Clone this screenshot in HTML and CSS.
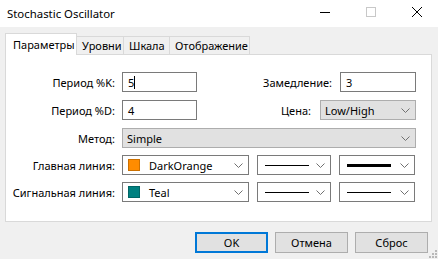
FILE: index.html
```html
<!DOCTYPE html>
<html>
<head>
<meta charset="utf-8">
<link rel="stylesheet" href="styles.css">
</head>
<body>
<div class="window">
  <div class="titlebar">
    <span class="title">Stochastic Oscillator</span>
    <div class="caption-btns">
      <svg class="cap" width="46" height="27" viewBox="0 0 46 27"><path d="M18 12.5h10" stroke="#000" stroke-width="1"/></svg>
      <svg class="cap" width="46" height="27" viewBox="0 0 46 27"><rect x="18.5" y="7.5" width="9" height="9" fill="none" stroke="#c8c8c8"/></svg>
      <svg class="cap" width="46" height="27" viewBox="0 0 46 27"><path d="M18 7l10 10M28 7l-10 10" stroke="#000" stroke-width="1"/></svg>
    </div>
  </div>

  <div class="tabs">
    <div class="tab active">Параметры</div>
    <div class="tab">Уровни</div>
    <div class="tab">Шкала</div>
    <div class="tab">Отображение</div>
  </div>

  <div class="panel">
    <div class="row r1">
      <span class="lbl">Период %K:</span>
      <div class="edit w75"><span>5</span><span class="caret"></span></div>
      <span class="lbl2">Замедление:</span>
      <div class="edit w76"><span>3</span></div>
    </div>
    <div class="row r2">
      <span class="lbl">Период %D:</span>
      <div class="edit w75"><span>4</span></div>
      <span class="lbl2">Цена:</span>
      <div class="combo grey w96"><span>Low/High</span><svg class="chev" width="9" height="5" viewBox="0 0 9 5"><path d="M0.5 0.5l4 4 4-4" fill="none" stroke="#707070"/></svg></div>
    </div>
    <div class="row r3">
      <span class="lbl">Метод:</span>
      <div class="combo grey wfull"><span>Simple</span><svg class="chev" width="9" height="5" viewBox="0 0 9 5"><path d="M0.5 0.5l4 4 4-4" fill="none" stroke="#707070"/></svg></div>
    </div>
    <div class="row r4">
      <span class="lbl">Главная линия:</span>
      <div class="combo white wcolor"><span class="swatch orange"></span><span>DarkOrange</span><svg class="chev" width="9" height="5" viewBox="0 0 9 5"><path d="M0.5 0.5l4 4 4-4" fill="none" stroke="#707070"/></svg></div>
      <div class="combo white w74"><span class="line thin"></span><svg class="chev" width="9" height="5" viewBox="0 0 9 5"><path d="M0.5 0.5l4 4 4-4" fill="none" stroke="#707070"/></svg></div>
      <div class="combo white w76"><span class="line thick"></span><svg class="chev" width="9" height="5" viewBox="0 0 9 5"><path d="M0.5 0.5l4 4 4-4" fill="none" stroke="#707070"/></svg></div>
    </div>
    <div class="row r5">
      <span class="lbl">Сигнальная линия:</span>
      <div class="combo white wcolor"><span class="swatch teal"></span><span>Teal</span><svg class="chev" width="9" height="5" viewBox="0 0 9 5"><path d="M0.5 0.5l4 4 4-4" fill="none" stroke="#707070"/></svg></div>
      <div class="combo white w74"><span class="line thin"></span><svg class="chev" width="9" height="5" viewBox="0 0 9 5"><path d="M0.5 0.5l4 4 4-4" fill="none" stroke="#707070"/></svg></div>
      <div class="combo white w76"><span class="line thin"></span><svg class="chev" width="9" height="5" viewBox="0 0 9 5"><path d="M0.5 0.5l4 4 4-4" fill="none" stroke="#707070"/></svg></div>
    </div>
  </div>

  <div class="buttons">
    <div class="btn default">OK</div>
    <div class="btn">Отмена</div>
    <div class="btn">Сброс</div>
  </div>
  <svg class="grip" width="8" height="8" viewBox="0 0 8 8">
    <rect x="6" y="0" width="2" height="2" fill="#b8b8b8"/>
    <rect x="3" y="3" width="2" height="2" fill="#b8b8b8"/>
    <rect x="6" y="3" width="2" height="2" fill="#b8b8b8"/>
    <rect x="0" y="6" width="2" height="2" fill="#b8b8b8"/>
    <rect x="3" y="6" width="2" height="2" fill="#b8b8b8"/>
    <rect x="6" y="6" width="2" height="2" fill="#b8b8b8"/>
  </svg>
</div>
</body>
</html>
```

FILE: styles.css
```css
* { box-sizing: border-box; }
html, body { margin: 0; padding: 0; }
body {
  width: 438px;
  height: 259px;
  overflow: hidden;
  background: #f0f0f0;
  font-family: "Noto Sans", "Open Sans", sans-serif;
  font-size: 11px;
  color: #000;
}
.window {
  position: relative;
  width: 438px;
  height: 259px;
  background: #f0f0f0;
}
.titlebar {
  height: 27px;
  background: #fff;
  display: flex;
  align-items: center;
  justify-content: space-between;
}
.title {
  padding-left: 7px;
  font-size: 11.4px;
  line-height: 27px;
}
.caption-btns {
  display: flex;
  margin-right: -2px;
}
.cap { display: block; }

.tabs {
  display: flex;
  align-items: flex-end;
  padding-left: 5px;
  margin-top: 6px;
  height: 21px;
  position: relative;
  z-index: 1;
}
.tab {
  height: 18px;
  line-height: 17px;
  padding: 0 0 0 5px;
  border: 1px solid #d9d9d9;
  border-bottom: none;
  margin-left: -1px;
  background: #f0f0f0;
  white-space: nowrap;
}
.tab:first-child { margin-left: 0; }
.tab.active {
  background: #fff;
  padding: 2px 0 0 7px;
  margin-bottom: -1px;
  height: 22px;
}
.tab:nth-child(1) { width: 72px; }
.tab:nth-child(2) { width: 48px; }
.tab:nth-child(3) { width: 47px; }
.tab:nth-child(4) { width: 81px; }

.panel {
  margin-left: 5px;
  width: 427px;
  height: 168px;
  background: #fff;
  border: 1px solid #d9d9d9;
  padding: 17px 15px 0 0;
}
.row {
  display: flex;
  align-items: center;
  height: 20px;
}
.r2 { margin-top: 8px; }
.r3 { margin-top: 8px; }
.r4 { margin-top: 7px; }
.r5 { margin-top: 7px; }
.lbl {
  width: 109px;
  text-align: right;
  margin-right: 7px;
  white-space: nowrap;
}
.lbl2 {
  flex: 1;
  text-align: right;
  margin-right: 9px;
  white-space: nowrap;
}
.r1 .lbl2 { margin-right: 8px; }
.edit {
  height: 20px;
  border: 1px solid #7a7a7a;
  background: #fff;
  display: flex;
  align-items: center;
  padding-left: 5px;
}
.caret {
  display: inline-block;
  width: 1px;
  height: 13px;
  background: #000;
}
.w75 { width: 75px; }
.w76 { width: 76px; }
.w74 { width: 74px; }
.w96 { width: 96px; }
.wfull { flex: 1; }
.wcolor { width: 127px; }
.combo {
  height: 20px;
  border: 1px solid #7a7a7a;
  display: flex;
  align-items: center;
  padding-left: 4px;
}
.combo + .combo { margin-left: 8px; }
.combo.grey {
  background: #e1e1e1;
  border-color: #adadad;
}
.combo.white { background: #fff; }
.combo .chev {
  margin-left: auto;
  margin-right: 5px;
}
.swatch {
  width: 12px;
  height: 12px;
  margin-left: 1px;
  margin-right: 9px;
  border: 1px solid rgba(0,0,0,0.2);
}
.swatch.orange { background: #ff8c00; }
.swatch.teal { background: #008080; }
.line {
  display: block;
  width: 44px;
  background: #000;
  margin-left: 3px;
}
.line.thin { height: 1px; }
.line.thick { height: 3px; }

.buttons {
  display: flex;
  justify-content: flex-end;
  gap: 7px;
  padding-right: 10px;
  margin-top: 10px;
}
.btn {
  width: 73px;
  height: 21px;
  border: 1px solid #adadad;
  background: #e1e1e1;
  text-align: center;
  line-height: 19px;
}
.btn.default {
  border: 2px solid #0078d7;
  line-height: 17px;
}
.grip {
  position: absolute;
  right: 1px;
  bottom: 1px;
}
```
